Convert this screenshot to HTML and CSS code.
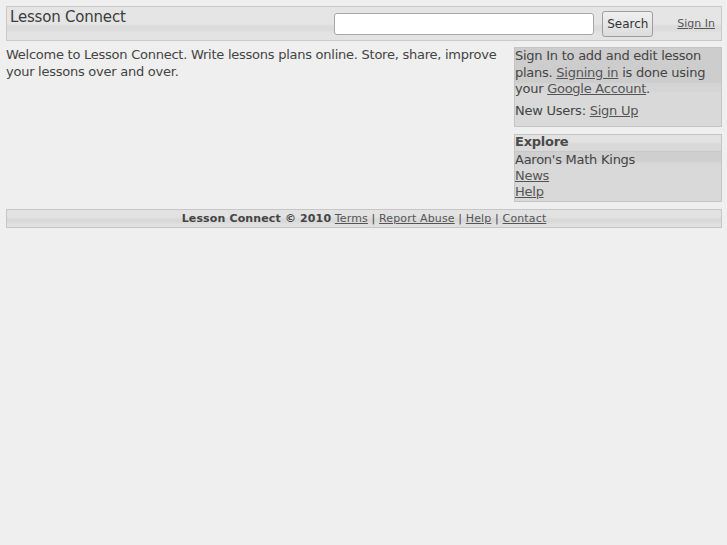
FILE: index.html
```html
<!DOCTYPE html>
<html lang="en">
<head>
    <meta charset="UTF-8">
    <title>Lesson Connect</title>
    <link rel="stylesheet" href="styles.css">
</head>
<body>
    <div class="header">
        <div class="brand">Lesson Connect</div>
        <form class="search" onsubmit="return false;">
            <input type="text" name="q">
            <button type="submit">Search</button>
        </form>
        <a class="signin" href="#">Sign In</a>
    </div>

    <div class="main">
        <div class="content">
            <p>Welcome to Lesson Connect. Write lessons plans online. Store, share, improve your lessons over and over.</p>
        </div>
        <div class="sidebar">
            <div class="box login-box">
                <p>Sign In to add and edit lesson plans. <a href="#">Signing in</a> is done using your <a href="#">Google Account</a>.</p>
                <p class="new-users">New Users: <a href="#">Sign Up</a></p>
            </div>
            <div class="box explore">
                <div class="box-title">Explore</div>
                <ul>
                    <li class="current">Aaron's Math Kings</li>
                    <li><a href="#">News</a></li>
                    <li><a href="#">Help</a></li>
                </ul>
            </div>
        </div>
    </div>

    <div class="footer">
        <b>Lesson Connect &copy; 2010</b> <a href="#">Terms</a> | <a href="#">Report Abuse</a> | <a href="#">Help</a> | <a href="#">Contact</a>
    </div>
</body>
</html>
```

FILE: styles.css
```css
body {
    margin: 6px 5px 6px 6px;
    background-color: #efefef;
    color: #444;
    font-family: "DejaVu Sans", Verdana, sans-serif;
    font-size: 13px;
    line-height: 17px;
    letter-spacing: -0.25px;
}
a {
    color: #555;
}
p {
    margin: 0;
}
.header {
    display: flex;
    align-items: flex-start;
    height: 33px;
    border: 1px solid #c9c9c9;
    background: linear-gradient(#e5e5e5 0px, #e5e5e5 17px, #dcdcdc 19px, #dcdcdc 23px, #e3e3e3 26px, #e3e3e3 100%);
}
.brand {
    flex: 1;
    padding: 2px 0 0 3px;
    font-size: 15px;
    color: #3c3c3c;
    letter-spacing: -0.2px;
}
.search {
    display: flex;
    align-items: center;
    gap: 8px;
    margin-top: 4px;
}
.search input {
    width: 256px;
    height: 18px;
    padding: 1px;
    border: 1px solid #a8a8a8;
    border-radius: 3px;
    background: #fff;
}
.search button {
    width: 51px;
    height: 26px;
    padding: 0;
    border: 1px solid #9e9e9e;
    border-radius: 3px;
    background: linear-gradient(#f0f0f0, #dcdcdc);
    color: #333;
    font-family: "DejaVu Sans", Verdana, sans-serif;
    font-size: 12px;
    letter-spacing: 0;
}
.signin {
    margin: 10px 6px 0 24px;
    font-size: 11px;
    line-height: 13px;
    letter-spacing: 0;
}
.main {
    display: flex;
    gap: 8px;
    margin-top: 6px;
}
.content {
    flex: 1;
}
.content p {
    margin-top: -1px;
}
.sidebar {
    width: 208px;
    display: flex;
    flex-direction: column;
    gap: 7px;
}
.box {
    border: 1px solid #c4c4c4;
}
.login-box {
    height: 78px;
    line-height: 16.5px;
    background: linear-gradient(#cdcdcd 0px, #cdcdcd 34px, #d4d4d4 36px, #d4d4d4 42px, #d9d9d9 45px, #d9d9d9 100%);
}
.new-users {
    margin-top: 5px;
}
.explore {
    background: #d9d9d9;
}
.box-title {
    font-weight: bold;
    color: #4a4a4a;
    line-height: 14px;
    padding-bottom: 2px;
    background: linear-gradient(#e2e2e2 0px, #e2e2e2 7px, #d9d9d9 9px, #d9d9d9 100%);
    border-bottom: 1px solid #c8c8c8;
}
.explore ul {
    list-style: none;
    margin: 0;
    padding: 0;
}
.explore li {
    line-height: 16.2px;
}
.explore li.current {
    background: linear-gradient(#cfcfcf 0px, #cfcfcf 9px, #d7d7d7 11px, #d9d9d9 100%);
}
.footer {
    margin-top: 7px;
    height: 17px;
    border: 1px solid #c6c6c6;
    background: linear-gradient(#e2e2e2 0px, #e2e2e2 7px, #d9d9d9 9px, #d9d9d9 12px, #e0e0e0 14px, #e0e0e0 100%);
    text-align: center;
    font-size: 11px;
    line-height: 17px;
    letter-spacing: 0.14px;
}
```
